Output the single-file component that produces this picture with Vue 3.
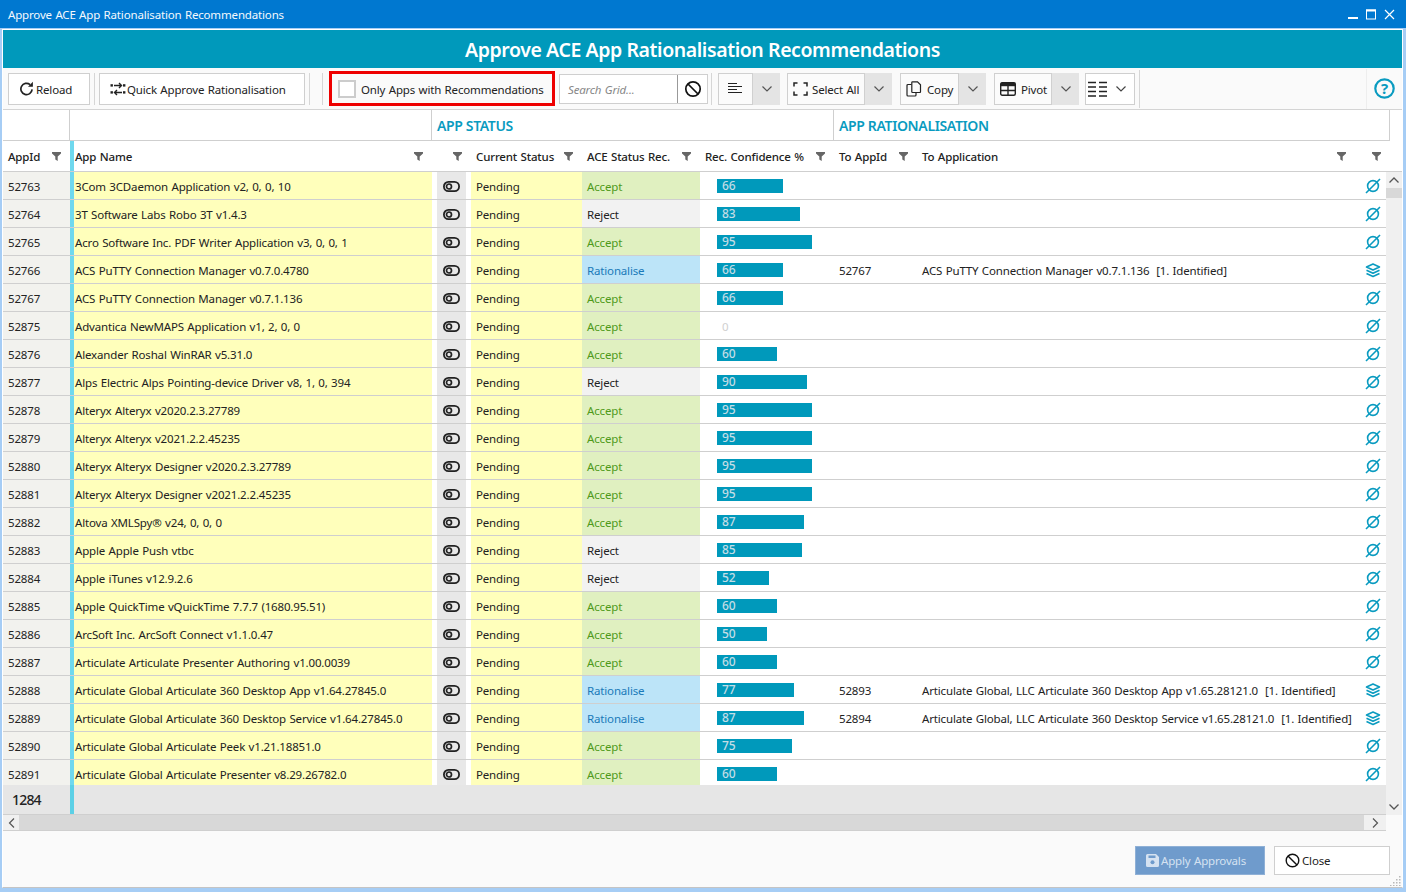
<script setup>
const names = [
  [52763,'3Com 3CDaemon Application v2, 0, 0, 10','Accept',66],
  [52764,'3T Software Labs Robo 3T v1.4.3','Reject',83],
  [52765,'Acro Software Inc. PDF Writer Application v3, 0, 0, 1','Accept',95],
  [52766,'ACS PuTTY Connection Manager v0.7.0.4780','Rationalise',66,52767,'ACS PuTTY Connection Manager v0.7.1.136  [1. Identified]'],
  [52767,'ACS PuTTY Connection Manager v0.7.1.136','Accept',66],
  [52875,'Advantica NewMAPS Application v1, 2, 0, 0','Accept',0],
  [52876,'Alexander Roshal WinRAR v5.31.0','Accept',60],
  [52877,'Alps Electric Alps Pointing-device Driver v8, 1, 0, 394','Reject',90],
  [52878,'Alteryx Alteryx v2020.2.3.27789','Accept',95],
  [52879,'Alteryx Alteryx v2021.2.2.45235','Accept',95],
  [52880,'Alteryx Alteryx Designer v2020.2.3.27789','Accept',95],
  [52881,'Alteryx Alteryx Designer v2021.2.2.45235','Accept',95],
  [52882,'Altova XMLSpy® v24, 0, 0, 0','Accept',87],
  [52883,'Apple Apple Push vtbc','Reject',85],
  [52884,'Apple iTunes v12.9.2.6','Reject',52],
  [52885,'Apple QuickTime vQuickTime 7.7.7 (1680.95.51)','Accept',60],
  [52886,'ArcSoft Inc. ArcSoft Connect v1.1.0.47','Accept',50],
  [52887,'Articulate Articulate Presenter Authoring v1.00.0039','Accept',60],
  [52888,'Articulate Global Articulate 360 Desktop App v1.64.27845.0','Rationalise',77,52893,'Articulate Global, LLC Articulate 360 Desktop App v1.65.28121.0  [1. Identified]'],
  [52889,'Articulate Global Articulate 360 Desktop Service v1.64.27845.0','Rationalise',87,52894,'Articulate Global, LLC Articulate 360 Desktop Service v1.65.28121.0  [1. Identified]'],
  [52890,'Articulate Global Articulate Peek v1.21.18851.0','Accept',75],
  [52891,'Articulate Global Articulate Presenter v8.29.26782.0','Accept',60],
]
const rows = names.map(([id, name, rec, conf, toId, toApp]) => ({ id, name, rec, conf, toId, toApp }))
const heads = [
  { label: 'AppId', cls: 'h-id' },
  { label: '', cls: 'h-stripe', nofilter: true },
  { label: 'App Name', cls: 'h-name' },
  { label: '', cls: 'h-eye' },
  { label: 'Current Status', cls: 'h-status' },
  { label: 'ACE Status Rec.', cls: 'h-rec' },
  { label: 'Rec. Confidence %', cls: 'h-conf' },
  { label: 'To AppId', cls: 'h-toid' },
  { label: 'To Application', cls: 'h-toapp' },
  { label: '', cls: 'h-last' },
]
</script>

<template>
  <div class="window">
    <div class="titlebar">
      <span class="title-text">Approve ACE App Rationalisation Recommendations</span>
      <div class="win-controls">
        <svg width="11" height="11" viewBox="0 0 11 11"><rect x="0" y="8" width="10" height="2" fill="#fff"/></svg>
        <svg width="11" height="11" viewBox="0 0 11 11"><rect x="0.5" y="1" width="9" height="9" fill="none" stroke="#fff"/><rect x="0" y="0.5" width="10" height="2" fill="#fff"/></svg>
        <svg width="11" height="11" viewBox="0 0 11 11"><path d="M1 1l9 9M10 1l-9 9" stroke="#fff" stroke-width="1.2" fill="none"/></svg>
      </div>
    </div>
    <div class="content">
      <div class="banner">Approve ACE App Rationalisation Recommendations</div>

      <div class="toolbar">
        <button class="btn b-reload">
          <svg width="15" height="15" viewBox="0 0 16 16"><path d="M14 9a6 6 0 1 1-2.200-5.200" fill="none" stroke="#222" stroke-width="1.800"/><path d="M14.800 .8v5.200H9.600z" fill="#222"/></svg>
          <span>Reload</span>
        </button>
        <i class="sep s1"></i>
        <button class="btn b-quick">
          <svg width="16" height="14" viewBox="0 0 16 14"><path d="M4 3.500h7M9 1l2.500 2.500L9 6M12 10.500H5M7 8l-2.500 2.500L7 13" fill="none" stroke="#222" stroke-width="1.400"/><rect x="0.500" y="2.200" width="2.400" height="2.400" fill="#222"/><rect x="13" y="9.200" width="2.400" height="2.400" fill="#222"/><rect x="13" y="2.200" width="2.400" height="2.400" fill="#222"/><rect x="0.500" y="9.200" width="2.400" height="2.400" fill="#222"/></svg>
          <span>Quick Approve Rationalisation</span>
        </button>
        <i class="sep s2"></i>
        <i class="sep s3"></i>
        <div class="red-box">
          <span class="check"></span>
          <span>Only Apps with Recommendations</span>
        </div>
        <div class="search">
          <span class="search-text">Search Grid...</span>
          <span class="search-clear">
            <svg width="18" height="18" viewBox="0 0 18 18"><circle cx="9" cy="9" r="7.200" fill="none" stroke="#111" stroke-width="1.700"/><path d="M4 4l10 10" stroke="#111" stroke-width="1.700"/></svg>
          </span>
        </div>
        <i class="sep s4"></i>
        <div class="split sp-align">
          <div class="split-main">
            <svg width="15" height="13" viewBox="0 0 15 13"><path d="M0 1.500h9M0 4.500h14M0 7.500h9M0 10.500h14" stroke="#222" stroke-width="1"/></svg>
          </div>
          <div class="split-drop"><svg width="10" height="6" viewBox="0 0 10 6"><path d="M.5.5L5 5 9.500.5" fill="none" stroke="#555" stroke-width="1.200"/></svg></div>
        </div>
        <div class="split sp-select">
          <div class="split-main">
            <svg width="15" height="14" viewBox="0 0 15 14"><path d="M1 4.500V1h3.500M10.500 1H14v3.500M14 9.500V13h-3.500M4.500 13H1V9.500" fill="none" stroke="#222" stroke-width="1.500"/></svg>
            <span>Select All</span>
          </div>
          <div class="split-drop"><svg width="10" height="6" viewBox="0 0 10 6"><path d="M.5.5L5 5 9.500.5" fill="none" stroke="#555" stroke-width="1.200"/></svg></div>
        </div>
        <div class="split sp-copy">
          <div class="split-main">
            <svg width="16" height="16" viewBox="0 0 16 16"><path d="M5.500 3.500H2a1 1 0 0 0-1 1V14a1 1 0 0 0 1 1h7a1 1 0 0 0 1-1v-2.500" fill="none" stroke="#222" stroke-width="1.200"/><path d="M6.500.8h5l3 3v7a.7.700 0 0 1-.7.700H6.500a.7.700 0 0 1-.7-.7V1.500a.7.700 0 0 1 .7-.7z" fill="none" stroke="#222" stroke-width="1.200"/></svg>
            <span>Copy</span>
          </div>
          <div class="split-drop"><svg width="10" height="6" viewBox="0 0 10 6"><path d="M.5.5L5 5 9.500.5" fill="none" stroke="#555" stroke-width="1.200"/></svg></div>
        </div>
        <div class="split sp-pivot">
          <div class="split-main">
            <svg width="16" height="14" viewBox="0 0 16 14"><rect x="0.700" y="0.700" width="14.600" height="12.600" rx="1.500" fill="none" stroke="#222" stroke-width="1.400"/><rect x="0.700" y="0.700" width="14.600" height="3.500" fill="#222"/><path d="M8 4v9M1 8.500h14" stroke="#222" stroke-width="1.400"/></svg>
            <span>Pivot</span>
          </div>
          <div class="split-drop"><svg width="10" height="6" viewBox="0 0 10 6"><path d="M.5.5L5 5 9.500.5" fill="none" stroke="#555" stroke-width="1.200"/></svg></div>
        </div>
        <button class="btn b-cols">
          <svg width="19" height="16" viewBox="0 0 19 16"><path d="M0 1.500h8M11 1.500h8M0 6h8M11 6h8M0 10.500h8M11 10.500h8M0 15h8M11 15h8" stroke="#222" stroke-width="1.600"/></svg>
          <svg class="cols-chev" width="10" height="6" viewBox="0 0 10 6"><path d="M.5.5L5 5 9.500.5" fill="none" stroke="#444" stroke-width="1.200"/></svg>
        </button>
        <i class="sep s5"></i>
        <div class="help">
          <svg width="21" height="21" viewBox="0 0 21 21"><circle cx="10.500" cy="10.500" r="9.200" fill="none" stroke="#0a9bc0" stroke-width="2.200"/><text x="10.500" y="15.500" text-anchor="middle" class="help-q">?</text></svg>
        </div>
      </div>

      <div class="groups">
        <div class="g g1"></div>
        <div class="g g2"></div>
        <div class="g g3">APP STATUS</div>
        <div class="g g4">APP RATIONALISATION</div>
      </div>

      <div class="head">
        <div v-for="h in heads" :key="h.cls" class="hc" :class="h.cls">
          <span>{{ h.label }}</span>
          <svg v-if="!h.nofilter" class="funnel" width="9" height="9" viewBox="0 0 9 9"><path d="M0 0h9v1.500L5.700 4.500V9L3.300 7.500v-3L0 1.500z" fill="#666"/></svg>
        </div>
      </div>

      <div class="middle">
        <div class="grid-col">
          <div class="rows">
            <div v-for="r in rows" :key="r.id" class="row">
              <div class="c c-id">{{ r.id }}</div>
              <div class="c c-stripe"></div>
              <div class="c c-name">{{ r.name }}</div>
              <div class="c"></div>
              <div class="c c-eye">
                <svg width="17" height="11" viewBox="0 0 17 11"><rect x="0.900" y="0.900" width="15.200" height="9.200" rx="4.600" fill="none" stroke="#222" stroke-width="1.800"/><circle cx="6" cy="5.500" r="2.500" fill="none" stroke="#222" stroke-width="1.700"/></svg>
              </div>
              <div class="c"></div>
              <div class="c c-status">Pending</div>
              <div class="c c-rec" :class="'rec-' + r.rec">{{ r.rec }}</div>
              <div class="c c-conf">
                <div v-if="r.conf" class="bar" :style="{ width: r.conf + 'px' }">{{ r.conf }}</div>
                <div v-else class="zero">0</div>
              </div>
              <div class="c c-toid">{{ r.toId }}</div>
              <div class="c c-toapp">{{ r.toApp }}</div>
              <div class="c c-act">
                <svg v-if="r.toId" width="16" height="15" viewBox="0 0 16 15"><path d="M8 1l6.500 3L8 7 1.500 4z" fill="none" stroke="#0a9bc0" stroke-width="1.600" stroke-linejoin="round"/><path d="M1.500 7.300L8 10.300l6.500-3M1.500 10.500L8 13.500l6.500-3" fill="none" stroke="#0a9bc0" stroke-width="1.600" stroke-linejoin="round"/></svg>
                <svg v-else width="16" height="16" viewBox="0 0 16 16"><circle cx="8" cy="8" r="5.400" fill="none" stroke="#0a9bc0" stroke-width="1.600"/><path d="M1 15L15 1" stroke="#0a9bc0" stroke-width="1.600"/></svg>
              </div>
            </div>
          </div>
          <div class="footer">
            <div class="f-count">1284</div>
            <div class="f-stripe"></div>
          </div>
          <div class="hscroll">
            <div class="hs-btn hs-l"><svg width="7" height="10" viewBox="0 0 7 10"><path d="M6 .5L1.500 5 6 9.500" fill="none" stroke="#555" stroke-width="1.200"/></svg></div>
            <div class="hs-btn hs-r"><svg width="7" height="10" viewBox="0 0 7 10"><path d="M1 .5L5.500 5 1 9.500" fill="none" stroke="#555" stroke-width="1.200"/></svg></div>
          </div>
        </div>
        <div class="vscroll">
          <div class="vs-up"><svg width="10" height="6" viewBox="0 0 10 6"><path d="M.5 5.500L5 1l4.500 4.500" fill="none" stroke="#555" stroke-width="1.300"/></svg></div>
          <div class="vs-thumb"></div>
          <div class="vs-down"><svg width="10" height="6" viewBox="0 0 10 6"><path d="M.5.5L5 5 9.500.5" fill="none" stroke="#555" stroke-width="1.300"/></svg></div>
        </div>
      </div>

      <div class="bottom">
        <button class="apply">
          <svg width="13" height="13" viewBox="0 0 13 13"><path d="M1.500 0H10l3 3v8.500A1.500 1.500 0 0 1 11.500 13h-10A1.500 1.500 0 0 1 0 11.500v-10A1.500 1.500 0 0 1 1.500 0z" fill="#d5e2f1"/><rect x="2.500" y="1.500" width="7" height="2.500" fill="#6f9bcc"/><circle cx="6.500" cy="8.300" r="2" fill="#6f9bcc"/></svg>
          <span>Apply Approvals</span>
        </button>
        <button class="close">
          <svg width="15" height="15" viewBox="0 0 15 15"><circle cx="7.500" cy="7.500" r="6.300" fill="none" stroke="#111" stroke-width="1.400"/><path d="M3 3l9 9" stroke="#111" stroke-width="1.400"/></svg>
          <span>Close</span>
        </button>
        <svg class="grip" width="11" height="11" viewBox="0 0 11 11" fill="#b8b8b8"><rect x="9" y="1" width="1.500" height="1.500"/><rect x="6" y="4" width="1.500" height="1.500"/><rect x="9" y="4" width="1.500" height="1.500"/><rect x="3" y="7" width="1.500" height="1.500"/><rect x="6" y="7" width="1.500" height="1.500"/><rect x="9" y="7" width="1.500" height="1.500"/><rect x="0" y="10" width="1.500" height="1"/><rect x="3" y="10" width="1.500" height="1"/><rect x="6" y="10" width="1.500" height="1"/><rect x="9" y="10" width="1.500" height="1"/></svg>
      </div>
    </div>
  </div>
</template>

<style>
html, body { margin: 0; padding: 0; background: #a6cdf5; overflow: hidden; }
</style>

<style scoped>
.window {
  width: 1406px; height: 892px; background: #a6cdf5; display: flex; flex-direction: column;
  font-family: "Noto Sans", "Open Sans", sans-serif; font-size: 11.5px; color: #222; overflow: hidden;
  letter-spacing: -0.16px; word-spacing: 0.6px;
}
.titlebar {
  height: 28px; flex: none; background: #0078d0; color: #fff; display: flex; align-items: center;
  justify-content: space-between; padding: 0 11px 0 8px; box-sizing: border-box;
}
.title-text { color: #f4f9fd; }
.win-controls { display: flex; gap: 7px; align-items: center; }
.content {
  flex: none; margin: 1px 3px 0 2px; width: 1401px; height: 859px; background: #fafafa; border-left: 1px solid #fff;
  border-right: 1px solid #fff; box-sizing: border-box; display: flex; flex-direction: column; border-top: 1px solid #fff;
  border-bottom: 1px solid #c4c4c4;
}
.banner {
  height: 38px; flex: none; background: #0099bb; color: #fff; font-size: 19.5px; font-weight: 600;
  text-align: center; line-height: 40px; letter-spacing: -0.42px; word-spacing: 0;
}
.toolbar {
  height: 42px; flex: none; position: relative; background: #fafafa; border-bottom: 1px solid #d4d4d4;
  box-sizing: border-box; display: flex; align-items: center;
}
.btn {
  font: inherit; letter-spacing: inherit; word-spacing: inherit; color: #222; background: #fff; border: 1px solid #cfcfcf; height: 32px;
  display: flex; align-items: center; box-sizing: border-box; padding: 0; margin: 0; flex: none;
}
.btn span, .red-box span:last-child, .split-main span { position: relative; top: 1px; }
.b-reload { margin-left: 5px; width: 82px; padding-left: 10px; gap: 2px; }
.b-quick { margin-left: 4px; width: 206px; padding-left: 10px; gap: 1px; }
.b-cols { margin-left: 6px; width: 50px; padding-left: 2px; gap: 9px; }
.sep { display: block; width: 1px; height: 32px; background: #d6d6d6; flex: none; }
.s1 { margin-left: 4px; }
.s2 { margin-left: 4px; }
.s3 { margin-left: 12px; }
.s4 { margin-left: 3px; }
.s5 { margin-left: 4px; height: 38px; }
.red-box {
  margin-left: 6px; width: 226px; height: 35px; border: 3px solid #ee0000; box-sizing: border-box;
  display: flex; align-items: center; padding-left: 6px; gap: 5px; flex: none;
}
.check { width: 18px; height: 18px; box-sizing: border-box; border: 2px solid #cccccc; background: #fff; display: block; }
.search {
  margin-left: 4px; width: 149px; height: 30px; box-sizing: border-box; border: 1px solid #cfcfcf; background: #fff;
  display: flex; flex: none;
}
.search-text { flex: 1; font-style: italic; color: #888; padding-left: 8px; line-height: 29px; }
.search-clear { width: 29px; border-left: 1px solid #999; display: flex; align-items: center; justify-content: center; }
.split { display: flex; height: 32px; flex: none; }
.split-main {
  background: #fbfbfb; border: 1px solid #d0d0d0; box-sizing: border-box; display: flex; align-items: center; justify-content: flex-start;
}
.split-drop { width: 27px; background: #e4e4e4; display: flex; align-items: center; justify-content: center; }
.sp-align { margin-left: 6px; }
.sp-align .split-main { width: 35px; justify-content: center; }
.sp-align .split-drop { width: 27px; }
.sp-select { margin-left: 7px; }
.sp-select .split-main { width: 78px; padding-left: 5px; gap: 4px; }
.sp-copy { margin-left: 8px; }
.sp-copy .split-main { width: 59px; padding-left: 5px; gap: 5px; }
.sp-pivot { margin-left: 8px; }
.sp-pivot .split-main { width: 58px; padding-left: 5px; gap: 5px; }
.help {
  margin-left: auto; width: 36px; height: 40px; border-left: 1px solid #eee; box-sizing: border-box;
  display: flex; align-items: center; justify-content: center;
}
.help-q { font-size: 15px; font-weight: 700; fill: #0a9bc0; font-family: "Noto Sans", sans-serif; }
.groups { height: 31px; flex: none; display: flex; background: #fff; box-sizing: border-box; }
.g {
  box-sizing: border-box; border-right: 1px solid #cfcfcf; border-bottom: 1px solid #cfcfcf; color: #0a9bc0;
  font-size: 14px; font-weight: 600; line-height: 31px; padding-left: 5px; letter-spacing: -0.36px; word-spacing: 0; flex: none;
}
.g1 { width: 67px; }
.g2 { width: 362px; }
.g3 { width: 402px; }
.g4 { width: 556px; }
.head {
  height: 31px; flex: none; background: #fff; box-sizing: border-box; border-bottom: 1px solid #cfcfcf; display: grid;
  grid-template-columns: 67px 4px 358px 39px 111px 118px 133px 83px 444px 42px;
}
.hc { display: flex; align-items: center; justify-content: space-between; box-sizing: border-box; color: #222; font-weight: 500; padding-right: 9px; white-space: nowrap; }
.funnel { flex: none; }
.h-id { padding-left: 5px; }
.h-stripe { background: #6fd8ee; padding: 0; }
.h-name { padding-left: 1px; }
.h-status { padding-left: 5px; }
.h-rec { padding-left: 5px; }
.h-conf { padding-left: 5px; padding-right: 8px; }
.h-toid { padding-left: 6px; padding-right: 8px; }
.h-toapp { padding-left: 6px; padding-right: 14px; }
.h-last { padding-right: 21px; }
.middle { flex: none; display: flex; height: 659px; }
.grid-col { width: 1383px; flex: none; display: flex; flex-direction: column; }
.rows { height: 613px; flex: none; overflow: hidden; background: #fff; }
.row {
  height: 28px; box-sizing: border-box; display: grid; border-bottom: 1px solid #cfcfcf;
  grid-template-columns: 67px 4px 358px 5px 29px 5px 111px 118px 133px 83px 444px 26px;
}
.c { display: flex; align-items: center; white-space: pre; box-sizing: border-box; min-width: 0; overflow: hidden; padding-top: 1px; }
.c-id { background: #f2f2ee; padding-left: 5px; }
.c-stripe { background: #6fd8ee; }
.c-name { background: #ffffbb; padding-left: 1px; }
.c-eye { background: #e8e8e8; justify-content: center; }
.c-status { background: #ffffbb; padding-left: 5px; }
.c-rec { padding-left: 5px; }
.rec-Accept { background: #e0f0c0; color: #4f9a1a; }
.rec-Reject { background: #f2f2f2; color: #222; }
.rec-Rationalise { background: #bce4f8; color: #1a7ab8; }
.c-conf { padding-left: 17px; }
.bar { height: 14px; background: #0099bb; color: #c4dde6; font-size: 12px; font-weight: 500; line-height: 14px; padding-left: 5px; box-sizing: border-box; }
.zero { color: #d0d0d0; padding-left: 5px; }
.c-toid, .c-toapp { padding-left: 6px; }
.c-act { justify-content: center; }
.footer { height: 30px; flex: none; background: #e6e6e6; display: flex; box-sizing: border-box; border-bottom: 1px solid #cfcfcf; }
.f-count { width: 67px; padding-left: 9px; font-size: 14px; font-weight: 500; line-height: 30px; box-sizing: border-box; letter-spacing: -0.8px; }
.f-stripe { width: 4px; background: #5cd0e6; }
.hscroll { height: 16px; flex: none; background: #d8d8d8; display: flex; justify-content: space-between; border-bottom: 1px solid #cfcfcf; box-sizing: border-box; }
.hs-btn { background: #f0f0f0; display: flex; align-items: center; justify-content: center; }
.hs-l { width: 16px; }
.hs-r { width: 22px; }
.vscroll { width: 16px; flex: none; height: 643px; background: #f0f0f0; display: flex; flex-direction: column; }
.vs-up { height: 16px; display: flex; align-items: center; justify-content: center; flex: none; }
.vs-thumb { height: 10px; background: #d8d8d8; flex: none; }
.vs-down { height: 16px; margin-top: auto; display: flex; align-items: center; justify-content: center; flex: none; }
.bottom { flex: 1; display: flex; align-items: flex-start; justify-content: flex-end; padding-top: 15px; padding-right: 12px; background: #fafafa; position: relative; gap: 9px; box-sizing: border-box; }
.apply {
  font: inherit; letter-spacing: inherit; word-spacing: inherit; width: 130px; height: 29px; box-sizing: border-box; background: #6f9bcc; border: 1px solid #8fb0d6; color: #d5e2f1;
  display: flex; align-items: center; padding: 0 0 0 10px; gap: 2px;
}
.close {
  font: inherit; letter-spacing: inherit; word-spacing: inherit; width: 116px; height: 29px; box-sizing: border-box; background: #fff; border: 1px solid #cfcfcf; color: #222;
  display: flex; align-items: center; padding: 0 0 0 10px; gap: 2px;
}
.grip { position: absolute; right: 1px; bottom: 1px; }
</style>
